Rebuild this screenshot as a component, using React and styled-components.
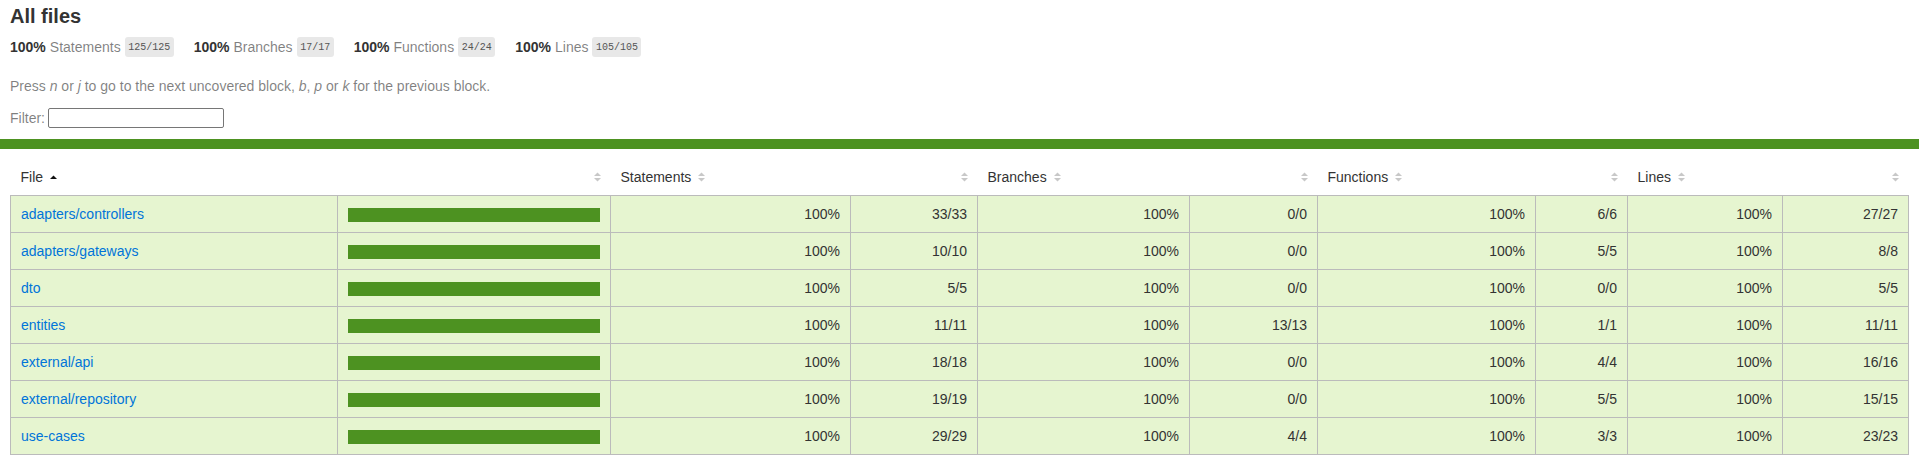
import React from "react";
import styled, { createGlobalStyle } from "styled-components";

const GlobalStyle = createGlobalStyle`
  html, body {
    margin: 0;
    padding: 0;
    background: #fff;
  }
  body {
    font-family: "Liberation Sans", Arial, sans-serif;
    font-size: 14px;
    color: #333;
  }
  *, *:before, *:after { box-sizing: border-box; }
`;

const Header = styled.div`
  padding: 5px 10px 11px;
`;

const Title = styled.h1`
  margin: 0;
  font-size: 20px;
  line-height: 23px;
  font-weight: bold;
`;

const Summary = styled.div`
  display: flex;
  align-items: center;
  gap: 20px;
  height: 20px;
  margin-top: 9px;
`;

const SummaryItem = styled.div`
  display: flex;
  align-items: center;
  gap: 4px;
  white-space: nowrap;
`;

const Strong = styled.span`
  font-weight: bold;
`;

const Quiet = styled.span`
  color: rgba(0, 0, 0, 0.5);
`;

const Fraction = styled.span`
  display: inline-flex;
  align-items: center;
  height: 20px;
  padding: 0 3.5px;
  font-family: "Liberation Mono", Consolas, monospace;
  font-size: 10px;
  color: #555;
  background: #e8e8e8;
  border-radius: 3px;
`;

const Hint = styled.p`
  margin: 21px 0 0;
  line-height: 16px;
  color: rgba(0, 0, 0, 0.5);
`;

const FilterRow = styled.div`
  display: flex;
  align-items: center;
  gap: 3px;
  margin-top: 14px;
  height: 20px;
  color: rgba(0, 0, 0, 0.5);
`;

const FilterInput = styled.input`
  width: 176px;
  height: 20px;
  margin: 0;
  border: 1px solid #767676;
  border-radius: 2px;
  padding: 1px 2px;
  font: inherit;
`;

const StatusLine = styled.div`
  height: 10px;
  background: rgb(77, 146, 33);
`;

const TableWrap = styled.div`
  padding: 10px;
`;

const Table = styled.table`
  width: 100%;
  border-collapse: collapse;
  table-layout: fixed;
`;

const Column = styled.col`
  width: ${(p) => (p.$w ? `${p.$w}px` : "auto")};
`;

const HeadRow = styled.tr`
  border-bottom: 1px solid #bbb;
`;

const HeadCell = styled.th`
  padding: 10px;
  line-height: 16px;
  font-weight: normal;
  text-align: ${(p) => p.$align || "left"};
  white-space: nowrap;
`;

const Body = styled.tbody`
  border: 1px solid #bbb;
`;

const Row = styled.tr`
  background: rgb(230, 245, 208);
  border-bottom: 1px solid #bbb;
`;

const Cell = styled.td`
  padding: 10px;
  line-height: 16px;
  text-align: ${(p) => p.$align || "left"};
  border-right: 1px solid #bbb;
  white-space: nowrap;
  &:last-child { border-right: none; }
`;

const FileLink = styled.a`
  color: #0074d9;
  text-decoration: none;
`;

const Chart = styled.div`
  height: 14px;
  margin-top: 1px;
  border: 1px solid rgb(77, 146, 33);
  background: rgb(77, 146, 33);
`;

const SorterIcon = styled.svg`
  display: inline-block;
  width: 7px;
  height: 10px;
  margin-left: 7px;
  vertical-align: baseline;
`;

const Sorter = ({ sorted }) => (
  <SorterIcon viewBox="0 0 7 10">
    {sorted ? (
      <polygon points="0,7 3.5,3.5 7,7" fill="#111" />
    ) : (
      <>
        <polygon points="0,4 3.5,0.5 7,4" fill="#c8c8c8" />
        <polygon points="0,6 3.5,9.5 7,6" fill="#c8c8c8" />
      </>
    )}
  </SorterIcon>
);

const totals = [
  { label: "Statements", frac: "125/125" },
  { label: "Branches", frac: "17/17" },
  { label: "Functions", frac: "24/24" },
  { label: "Lines", frac: "105/105" },
];

// column widths, border to border, as in the report
const widths = [327, 273, 240, 127, 212, 128, 218, 92, 155, null];

const files = [
  ["adapters/controllers", "33/33", "0/0", "6/6", "27/27"],
  ["adapters/gateways", "10/10", "0/0", "5/5", "8/8"],
  ["dto", "5/5", "0/0", "0/0", "5/5"],
  ["entities", "11/11", "13/13", "1/1", "11/11"],
  ["external/api", "18/18", "0/0", "4/4", "16/16"],
  ["external/repository", "19/19", "0/0", "5/5", "15/15"],
  ["use-cases", "29/29", "4/4", "3/3", "23/23"],
];

export default function App() {
  return (
    <>
      <GlobalStyle />
      <Header>
        <Title>All files</Title>
        <Summary>
          {totals.map((t) => (
            <SummaryItem key={t.label}>
              <Strong>100%</Strong>
              <Quiet>{t.label}</Quiet>
              <Fraction>{t.frac}</Fraction>
            </SummaryItem>
          ))}
        </Summary>
        <Hint>
          Press <em>n</em> or <em>j</em> to go to the next uncovered block, <em>b</em>,{" "}
          <em>p</em> or <em>k</em> for the previous block.
        </Hint>
        <FilterRow>
          Filter:
          <FilterInput type="search" />
        </FilterRow>
      </Header>
      <StatusLine />
      <TableWrap>
        <Table>
          <colgroup>
            {widths.map((w, i) => (
              <Column key={i} $w={w} />
            ))}
          </colgroup>
          <thead>
            <HeadRow>
              <HeadCell>
                File<Sorter sorted />
              </HeadCell>
              <HeadCell $align="right"><Sorter /></HeadCell>
              <HeadCell>Statements<Sorter /></HeadCell>
              <HeadCell $align="right"><Sorter /></HeadCell>
              <HeadCell>Branches<Sorter /></HeadCell>
              <HeadCell $align="right"><Sorter /></HeadCell>
              <HeadCell>Functions<Sorter /></HeadCell>
              <HeadCell $align="right"><Sorter /></HeadCell>
              <HeadCell>Lines<Sorter /></HeadCell>
              <HeadCell $align="right"><Sorter /></HeadCell>
            </HeadRow>
          </thead>
          <Body>
            {files.map(([name, s, b, f, l]) => (
              <Row key={name}>
                <Cell>
                  <FileLink href="#">{name}</FileLink>
                </Cell>
                <Cell>
                  <Chart />
                </Cell>
                <Cell $align="right">100%</Cell>
                <Cell $align="right">{s}</Cell>
                <Cell $align="right">100%</Cell>
                <Cell $align="right">{b}</Cell>
                <Cell $align="right">100%</Cell>
                <Cell $align="right">{f}</Cell>
                <Cell $align="right">100%</Cell>
                <Cell $align="right">{l}</Cell>
              </Row>
            ))}
          </Body>
        </Table>
      </TableWrap>
    </>
  );
}
